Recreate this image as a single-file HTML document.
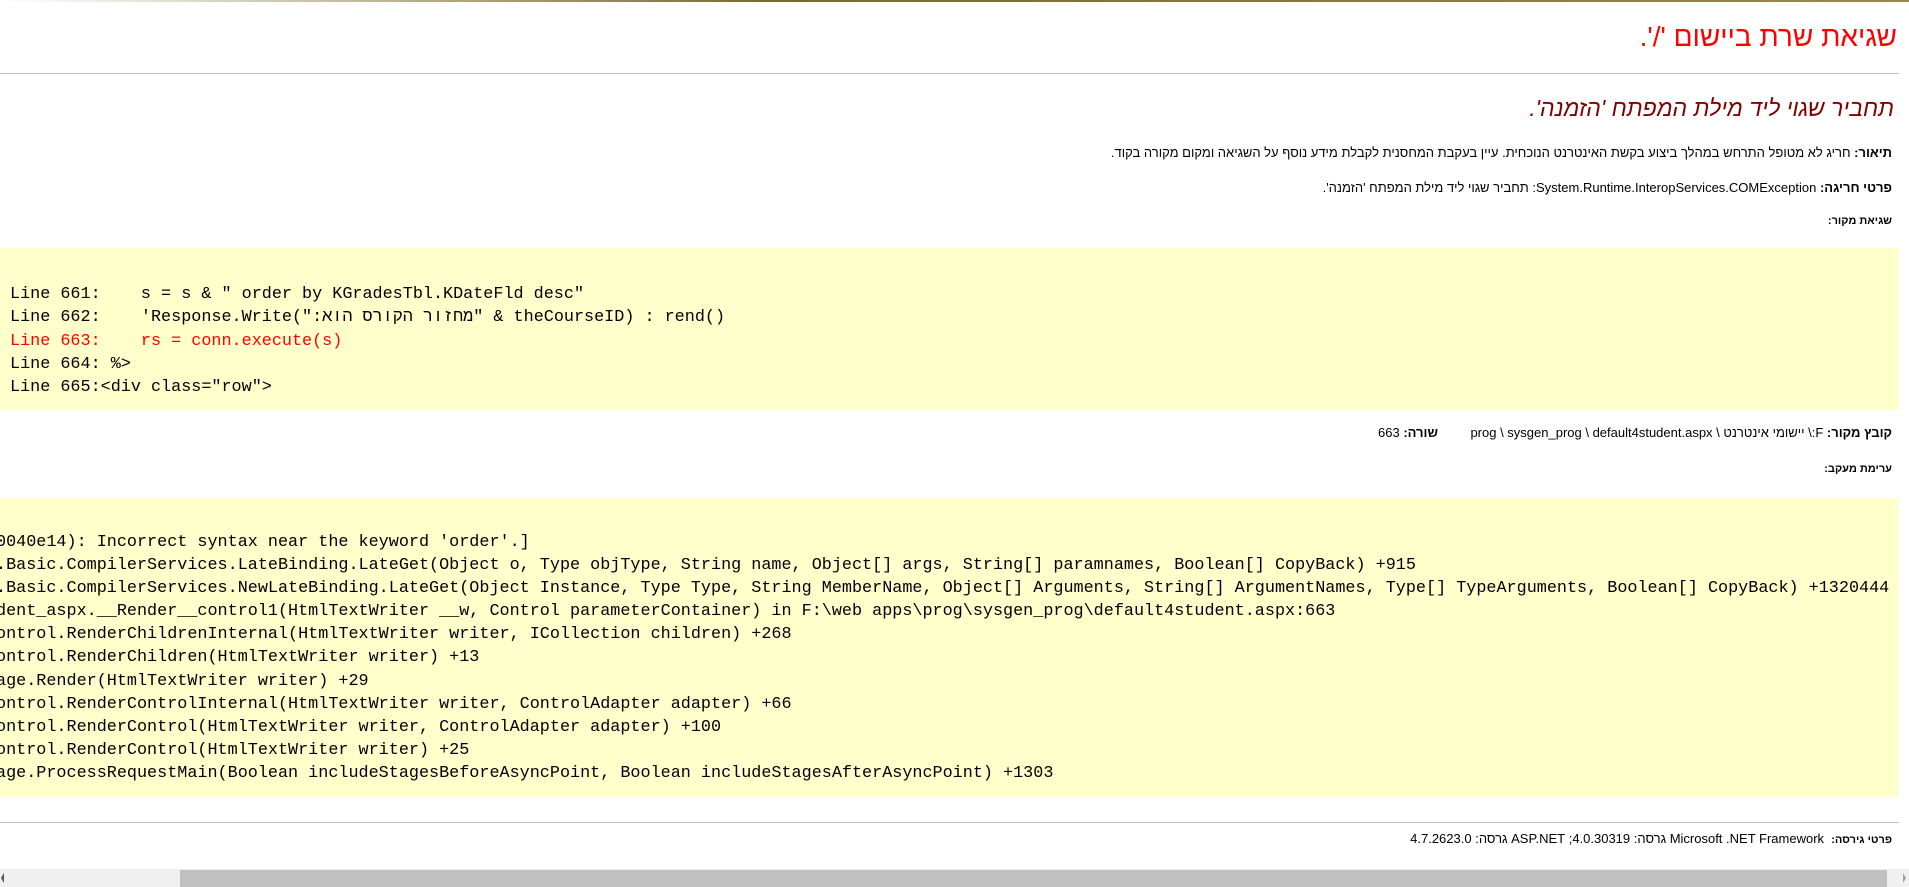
<!DOCTYPE html>
<html><head><meta charset="utf-8">
<style>
html,body{margin:0;padding:0;width:1909px;height:887px;overflow:hidden;background:#fff;position:relative}
.a{position:absolute;white-space:pre}
.he{font-family:"Liberation Sans","Noto Sans CJK JP",sans-serif;direction:rtl;right:17px;color:#000}
.m{font-family:"Liberation Mono","DejaVu Sans Mono",monospace;font-size:16.8px;color:#000;direction:ltr}
b{font-weight:bold}
</style></head><body>
<div class="a" style="left:0;top:0;width:1909px;height:2px;background:linear-gradient(90deg,#fff,#7a6a2a 40%,#9a8a40)"></div>
<div class="a he" style="top:21px;right:12px;font-size:28px;color:#f00">שגיאת שרת ביישום '/'.</div>
<div class="a" style="left:0;top:73px;width:1899px;height:1px;background:#c0c0c0"></div>
<div class="a he" style="top:95px;right:15px;font-size:23px;font-style:italic;color:#800000">תחביר שגוי ליד מילת המפתח 'הזמנה'.</div>
<div class="a he" style="top:145px;font-size:13px"><b>תיאור:</b> חריג לא מטופל התרחש במהלך ביצוע בקשת האינטרנט הנוכחית. עיין בעקבת המחסנית לקבלת מידע נוסף על השגיאה ומקום מקורה בקוד.</div>
<div class="a he" style="top:180px;font-size:13px"><b>פרטי חריגה:</b> <span dir="ltr">System.Runtime.InteropServices.COMException</span>: תחביר שגוי ליד מילת המפתח 'הזמנה'.</div>
<div class="a he" style="top:215px;font-size:11px"><b>שגיאת מקור:</b></div>
<div class="a" style="left:0;top:248px;width:1899px;height:162px;background:#ffffcc"></div>
<div class="a m" style="left:10px;top:283px;line-height:23.3px">Line 661:    s = s &amp; " order by KGradesTbl.KDateFld desc"
Line 662:    'Response.Write("<span dir="rtl">מחזור הקורס הוא:</span>" &amp; theCourseID) : rend()
<span style="color:#f00">Line 663:    rs = conn.execute(s)</span>
Line 664: %&gt;
Line 665:&lt;div class="row"&gt;</div>
<div class="a he" style="top:425px;font-size:13px"><b>קובץ מקור:</b> F:\ יישומי אינטרנט \ <span dir="ltr">prog \ sysgen_prog \ default4student.aspx</span>         <b>שורה:</b> 663</div>
<div class="a he" style="top:463px;font-size:11px"><b>ערימת מעקב:</b></div>
<div class="a" style="left:0;top:498px;width:1899px;height:299px;background:#ffffcc"></div>
<div class="a m" style="left:-4px;top:531px;line-height:23.1px">0040e14): Incorrect syntax near the keyword 'order'.]
.Basic.CompilerServices.LateBinding.LateGet(Object o, Type objType, String name, Object[] args, String[] paramnames, Boolean[] CopyBack) +915
.Basic.CompilerServices.NewLateBinding.LateGet(Object Instance, Type Type, String MemberName, Object[] Arguments, String[] ArgumentNames, Type[] TypeArguments, Boolean[] CopyBack) +1320444
dent_aspx.__Render__control1(HtmlTextWriter __w, Control parameterContainer) in F:\web apps\prog\sysgen_prog\default4student.aspx:663
ontrol.RenderChildrenInternal(HtmlTextWriter writer, ICollection children) +268
ontrol.RenderChildren(HtmlTextWriter writer) +13
age.Render(HtmlTextWriter writer) +29
ontrol.RenderControlInternal(HtmlTextWriter writer, ControlAdapter adapter) +66
ontrol.RenderControl(HtmlTextWriter writer, ControlAdapter adapter) +100
ontrol.RenderControl(HtmlTextWriter writer) +25
age.ProcessRequestMain(Boolean includeStagesBeforeAsyncPoint, Boolean includeStagesAfterAsyncPoint) +1303</div>
<div class="a" style="left:0;top:822px;width:1899px;height:1px;background:#c0c0c0"></div>
<div class="a he" style="top:831px;font-size:13px"><b style="font-size:11px">פרטי גירסה:</b>  <span dir="ltr">Microsoft .NET Framework</span> גרסה: <span dir="ltr">4.0.30319</span>; <span dir="ltr">ASP.NET</span> גרסה: <span dir="ltr">4.7.2623.0</span></div>
<div class="a" style="left:0;top:869px;width:1909px;height:18px;background:#f0f0f0"></div>
<div class="a" style="left:180px;top:870px;width:1707px;height:17px;background:#c1c1c1"></div>
<div class="a" style="left:1px;top:873px;width:0;height:0;border-top:5px solid transparent;border-bottom:5px solid transparent;border-right:3px solid #505050"></div>
<div class="a" style="left:1903px;top:873px;width:0;height:0;border-top:5px solid transparent;border-bottom:5px solid transparent;border-left:3px solid #a0a0a0"></div>
</body></html>
